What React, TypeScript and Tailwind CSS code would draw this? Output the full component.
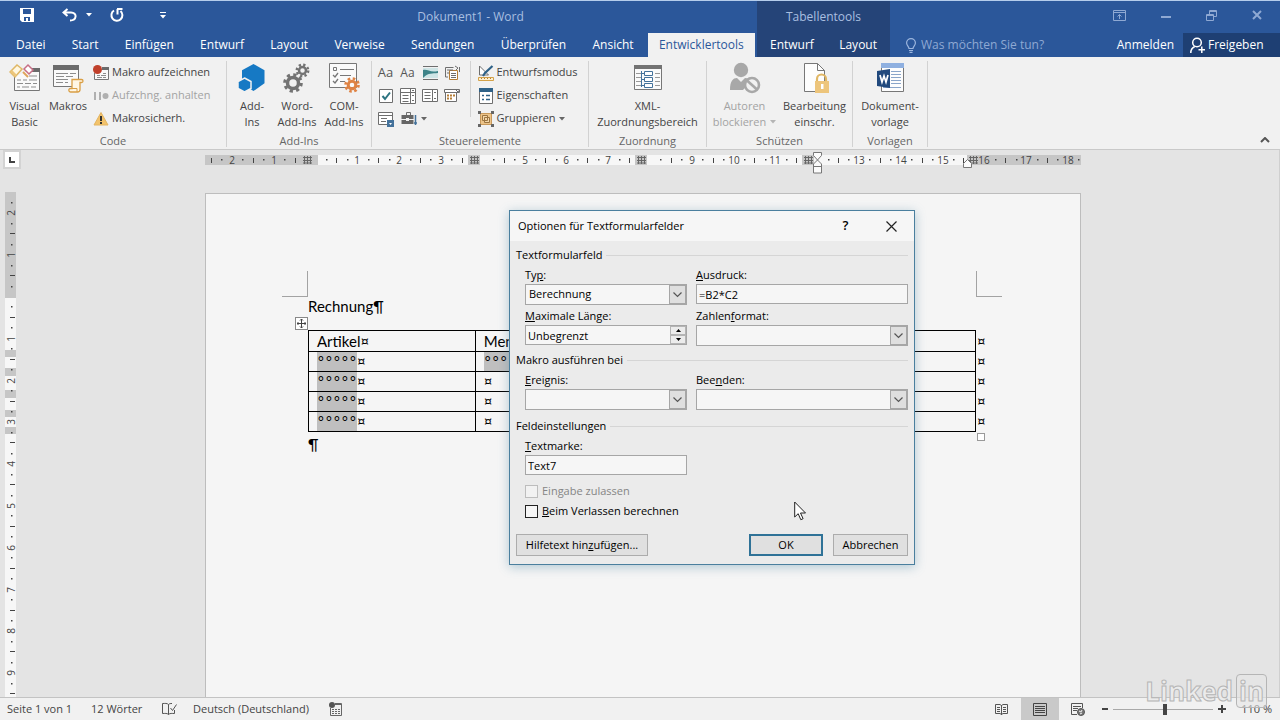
import type { ReactNode } from "react";

const tabs = ["Datei", "Start", "Einfügen", "Entwurf", "Layout", "Verweise", "Sendungen", "Überprüfen", "Ansicht"];

/* ---------- small helpers ---------- */

function Caret({ className = "text-[#666]" }: { className?: string }) {
  return (
    <svg width="6" height="4" viewBox="0 0 6 4" className={className}>
      <path d="M0 0h6L3 3.5z" fill="currentColor" />
    </svg>
  );
}

function BigButton({ icon, lines, disabled, caret, className }: {
  icon: ReactNode;
  lines: [string, string?];
  disabled?: boolean;
  caret?: boolean;
  className: string;
}) {
  return (
    <button disabled={disabled} className={`flex flex-col items-center whitespace-nowrap ${disabled ? "text-[#a3a3a3]" : ""} ${className}`}>
      <span className="mb-1 flex h-[33px] items-center">{icon}</span>
      <span className="leading-4">{lines[0]}</span>
      {lines[1] && (
        <span className="flex items-center gap-1 leading-4">
          {lines[1]}
          {caret && <Caret className="text-[#b5b5b5]" />}
        </span>
      )}
    </button>
  );
}

function SmallButton({ icon, label, disabled, caret }: { icon: ReactNode; label: string; disabled?: boolean; caret?: boolean }) {
  return (
    <button disabled={disabled} className={`flex h-[23px] items-center gap-[3px] whitespace-nowrap ${disabled ? "text-[#a3a3a3]" : ""}`}>
      {icon}
      {label}
      {caret && <Caret />}
    </button>
  );
}

function Group({ title, className, children }: { title: string; className: string; children: ReactNode }) {
  return (
    <section aria-label={title} className={`flex shrink-0 flex-col border-r border-[#d2d2d2] ${className}`}>
      <div className="flex flex-1 justify-center">{children}</div>
      <div className="h-3 text-center leading-3 text-[#666]">{title}</div>
    </section>
  );
}

/* ---------- ribbon icons ---------- */

const VisualBasicIcon = () => (
  <svg width="32" height="30" viewBox="0 0 32 30" fill="none">
    <path d="M5.500 14v13.500h25V5.500H23" stroke="#777" fill="#fafafa" />
    <path d="M23 5h8v4h-8z" fill="#6b6b6b" />
    <path d="M8 17h4m2 0h4m2 0h8M8 20.500h6m2 0h6m2 0h4M8 24h3m2 0h7m2 0h5M20 13h8" stroke="#8d8d8d" />
    <path d="M1 9l7-7 5 4-7 8z" fill="#fff7e0" stroke="#dfb765" strokeWidth="1.500" />
    <path d="M1 9l5 5 2-2-5-5z" fill="#ecc67b" />
    <path d="M15 6l4-4 5 5-4 4z" fill="#fff" stroke="#c76f86" strokeWidth="1.500" />
    <path d="M14 9l5 5" stroke="#dfa45b" strokeWidth="2" />
  </svg>
);

const MacrosIcon = () => (
  <svg width="32" height="30" viewBox="0 0 32 30" fill="none">
    <path d="M1.500 2.500h25v21h-25z" fill="#fafafa" stroke="#777" />
    <path d="M1 2h26v5H1z" fill="#6b6b6b" />
    <path d="M4 10.500h12m2 0h6M4 13.500h8m2 0h7M4 16.500h12M4 19.500h7m2 0h3" stroke="#8d8d8d" />
    <path d="M20 16.500h9.500c2 0 2 3 0 3H28v7c0 2-1 2.500-2.500 2.500h-7c-2 0-2.500-3.500 0-3.500h1.500z" fill="#fff6e4" stroke="#d99e44" strokeWidth="1.300" />
    <path d="M18 25.500h7v3.500" stroke="#d99e44" />
  </svg>
);

const RecordIcon = () => (
  <svg width="16" height="16" viewBox="0 0 16 16" fill="none">
    <path d="M1.500 8v6.500h14V2.500H9" stroke="#777" fill="#fafafa" />
    <path d="M9 2h7v3H9z" fill="#6b6b6b" />
    <path d="M4 10.500h3m1 0h5M4 12.500h5m1 0h3M10 8.500h3" stroke="#8d8d8d" />
    <circle cx="4.500" cy="4.500" r="4.500" fill="#c0402b" />
  </svg>
);

const PauseIcon = () => (
  <svg width="16" height="16" viewBox="0 0 16 16" fill="#b0b0b0">
    <path d="M1 4h2v8H1zM6 4h2v8H6z" />
    <circle cx="12.500" cy="8" r="3" />
  </svg>
);

const WarnIcon = () => (
  <svg width="16" height="16" viewBox="0 0 16 16">
    <path d="M8 1.500l7 12.500H1z" fill="#f3c36b" stroke="#e3b461" strokeLinejoin="round" />
    <path d="M7 5h2v5H7zM7 11h2v2H7z" fill="#333" />
  </svg>
);

const AddInsIcon = () => (
  <svg width="30" height="30" viewBox="0 0 30 30" fill="#1679c4">
    <path d="M16.500 1l11 6.300v13L16.500 28 5 21V7.300z" />
    <path d="M7.500 15l6.500 3.500v7L7.500 29 1 25.500v-7z" stroke="#f1f1f1" strokeWidth="1.500" />
  </svg>
);

const GearsIcon = () => (
  <svg width="30" height="30" viewBox="0 0 30 30" fill="none" stroke="#737373">
    <circle cx="11" cy="20" r="5.500" strokeWidth="3.500" />
    <circle cx="11" cy="20" r="8.300" strokeWidth="3" strokeDasharray="3.260 3.260" />
    <circle cx="20.500" cy="7.500" r="3.500" strokeWidth="2.500" />
    <circle cx="20.500" cy="7.500" r="5.700" strokeWidth="2.500" strokeDasharray="2.240 2.240" />
  </svg>
);

const ComIcon = () => (
  <svg width="32" height="32" viewBox="0 0 32 32" fill="none">
    <path d="M1.500 1.500h27v24h-27z" fill="#fafafa" stroke="#777" />
    <path d="M5.500 5.500h3v3h-3zM12 7.500h14M12 13.500h11M12 19.500h5" stroke="#777" />
    <path d="M5 13l2 2 3-4M5 19l2 2 3-4" stroke="#777" strokeWidth="1.300" />
    <circle cx="24" cy="23" r="3.800" stroke="#df8344" strokeWidth="3" />
    <circle cx="24" cy="23" r="6.500" stroke="#df8344" strokeWidth="2.600" strokeDasharray="2.550 2.550" />
  </svg>
);

const XmlIcon = () => (
  <svg width="30" height="30" viewBox="0 0 30 30" fill="none">
    <path d="M1.500 2.500h27v24h-27z" fill="#fafafa" stroke="#777" />
    <path d="M1 2h28v4H1z" fill="#737373" />
    <path d="M3 10.500h5M3 14.500h5M3 18.500h5M3 22.500h5M22 10.500h5M22 14.500h5M22 18.500h5M22 22.500h5" stroke="#999" />
    <path d="M8.500 8v16M8.500 10.500h3M8.500 16.500h3M8.500 22.500h3" stroke="#44729b" />
    <path d="M11.500 8.500h8v4h-8zM11.500 14.500h8v4h-8zM11.500 20.500h8v4h-8z" fill="#fff" stroke="#44729b" />
  </svg>
);

const BlockAuthorsIcon = () => (
  <svg width="32" height="32" viewBox="0 0 32 32" fill="none">
    <circle cx="12" cy="8" r="7.200" fill="#a8a8a8" />
    <path d="M1 28c0-9 3-12 7-12l4 4 4-4c3 0 5 1 6 3l-8 9z" fill="#a8a8a8" />
    <circle cx="23" cy="23" r="7" fill="#f1f1f1" stroke="#a8a8a8" strokeWidth="2.600" />
    <path d="M18 18.500l10 9" stroke="#a8a8a8" strokeWidth="2.600" />
  </svg>
);

const RestrictIcon = () => (
  <svg width="30" height="32" viewBox="0 0 30 32" fill="none">
    <path d="M4.500 1.500h13l7 7v21h-20z" fill="#fdfdfd" stroke="#777" />
    <path d="M17.500 1.500v7h7" stroke="#777" />
    <path d="M17 20v-3a4.500 4.500 0 019 0v3" stroke="#e0b765" strokeWidth="2.200" />
    <path d="M15 19h14v12H15z" fill="#edc57b" />
    <path d="M21 22h2.500v5H21z" fill="#fff" />
  </svg>
);

const TemplateIcon = () => (
  <svg width="30" height="32" viewBox="0 0 30 32" fill="none">
    <path d="M6.500 1.500h22v28h-22z" fill="#fdfdfd" stroke="#777" />
    <path d="M6 1h23v5H6z" fill="#8fb0e0" />
    <path d="M16 9.500h10M16 12.500h10M16 15.500h10M16 18.500h10M16 21.500h10M8 25.500h18" stroke="#8aa5c9" />
    <path d="M2 9l13-2v19L2 24z" fill="#21497d" />
    <path d="M5 13l2 7 2-6 2 6 2-7" stroke="#fff" strokeWidth="1.700" />
  </svg>
);

/* form control icons, 16px each */
const ctl = (children: ReactNode) => (
  <svg width="16" height="16" viewBox="0 0 16 16" fill="none" stroke="#6e6e6e">{children}</svg>
);

const controls: { label: string; icon: ReactNode }[] = [
  { label: "Rich-Text", icon: <span className="text-[13px] text-[#555]">Aa</span> },
  { label: "Nur-Text", icon: <span className="text-[12px] text-[#555]">Aa</span> },
  { label: "Bild", icon: ctl(<><path d="M1 1.500h15M1 14.500h15" /><path d="M1 3h15v10H1z" fill="#cfe5e6" stroke="none" /><path d="M1 5c5-1 7 3 15 1v2c-6 1-9-1-15 5z" fill="#3d8388" stroke="none" /></>) },
  { label: "Baustein", icon: ctl(<><path d="M5.500 5.500h8v9h-8z" fill="#fff" stroke="#b57d35" /><path d="M7 8.500h5M7 10.500h5M7 12.500h5" /><path d="M1.500 12V2.500h8M1.500 12H4M15.500 2v5M11 1l3 2-2 2M3 5h6M3 8h2" /></>) },
  { label: "Kontrollkästchen", icon: ctl(<><path d="M1.500 1.500h13v13h-13z" fill="#fff" /><path d="M4.500 8l2.500 3 5-6.500" stroke="#2c7481" strokeWidth="2" /></>) },
  { label: "Kombinationsfeld", icon: ctl(<><path d="M.5.500h15v15H.5zM10.500.500v15M.5 4.500h15" fill="#fff" /><path d="M2.500 7.500h6M2.500 10.500h6M2.500 13.500h6M12 2l1 1 1-1M12 8l1-1 1 1M12 12l1 1 1-1" /></>) },
  { label: "Dropdownliste", icon: ctl(<><path d="M.5 1.500h15v12H.5zM10.500 1.500v12" fill="#fff" /><path d="M2.500 4.500h6M2.500 7.500h6M2.500 10.500h6M12 5l1-1 1 1M12 10l1 1 1-1" /></>) },
  { label: "Datum", icon: ctl(<><path d="M.5 1.500h15v3H.5zM1.500 4.500h11v9h-11z" fill="#fff" /><path d="M12 2l2 2 1.500-2" /><path d="M3 7.500h2m1 0h2m1 0h2M3 10.500h2m1 0h2" stroke="#b57d35" strokeWidth="1.800" /></>) },
  { label: "Wiederholung", icon: ctl(<><path d="M.5 1.500h14v12H.5zM.5 4.500h14" fill="#fff" /><path d="M3 7.500h6M3 10.500h5" /><path d="M9 9h7v7H9z" fill="#44729b" stroke="none" /><path d="M11 12l1.500 2 1.500-2z" fill="#fff" stroke="none" /></>) },
  { label: "Vorversionstools", icon: ctl(<><path d="M5.500 4V1.500h4V4" /><path d="M.5 4h12v9H.5z" fill="#666" stroke="none" /><path d="M0 8.500h13" stroke="#f1f1f1" /><path d="M5 7h3v3H5z" fill="#f1f1f1" stroke="none" /><path d="M14.500 4v10M13 12h3" strokeWidth="1.500" stroke="#44729b" /></>) },
];

const DesignIcon = () => (
  <svg width="16" height="16" viewBox="0 0 16 16" fill="none">
    <path d="M1.500 1v9h9z" fill="#fff" stroke="#6e6e6e" />
    <path d="M14.500 1L7 8l-2 3" stroke="#2e6187" strokeWidth="2.200" />
    <path d="M.5 12.500h15v3H.5z" fill="#fff0cf" stroke="#d3a148" />
    <path d="M3.500 13v1M6.500 13v1M9.500 13v1M12.500 13v1" stroke="#b57d35" />
  </svg>
);

const PropertiesIcon = () => (
  <svg width="16" height="16" viewBox="0 0 16 16" fill="none">
    <path d="M1.500.500h13v15h-13z" fill="#fff" stroke="#6e6e6e" />
    <path d="M1 0h14v4H1z" fill="#2e6187" />
    <path d="M4 7.500h2M4 11.500h2M8 7.500h4M8 11.500h4" stroke="#2e6187" strokeWidth="1.500" />
  </svg>
);

const GroupIcon = () => (
  <svg width="16" height="16" viewBox="0 0 16 16" fill="none">
    <path d="M2.500 2.500h11v11h-11z" fill="#ecc48a" stroke="#c9995a" />
    <path d="M4.500 4.500h5v5h-5zM6.500 6.500h5v5h-5z" fill="#f3d6a8" stroke="#9b7440" />
    <path d="M0 0h3v3H0zM13 0h3v3h-3zM0 13h3v3H0zM13 13h3v3h-3z" fill="#666" />
  </svg>
);

/* ---------- rulers ---------- */

const CM = 41.8;

function HorizontalRuler() {
  const zero = 110.500;
  const marks: ReactNode[] = [];
  const hidden = [0, 4, 8, 12];
  for (let q = -10; q <= 73; q++) {
    const x = Math.round(zero + (q * CM) / 4);
    const n = q / 4;
    if (x < 4 || x > 874) continue;
    if (Number.isInteger(n)) {
      if (!hidden.includes(n)) {
        marks.push(<text key={q} x={x} y="14" textAnchor="middle">{Math.abs(n)}</text>);
      }
    } else if (q % 2 === 0) {
      marks.push(<path key={q} d={`M${x + 0.5} 8v5`} stroke="#444" />);
    } else {
      marks.push(<path key={q} d={`M${x} 9h1.500v1.500h-1.500z`} />);
    }
  }
  return (
    <svg width="876" height="25" viewBox="0 0 876 25" className="shrink-0 text-[10px]" fill="#444">
      <path d="M0 5h876v10H0z" fill="#c6c6c6" />
      <path d="M113 5h650v10H113z" fill="#f7f7f7" />
      {marks}
      {[102, 269, 436, 603, 768].map((x) => (
        <g key={x}>
          <path d={`M${x - 6} 5h12v10h-12z`} fill="#c6c6c6" />
          <path d={`M${x - 2.5} 6v8M${x + 0.5} 6v8M${x + 3.5} 6v8M${x - 4} 7.500h9M${x - 4} 10.500h9M${x - 4} 13h9`} stroke="#666" />
        </g>
      ))}
      <path d="M608.500 2.500h8v3l-4 4.500 4 4v9h-8v-9l4-4-4-4.500zM608.500 16.500h8" fill="#fbfbfb" stroke="#777" />
      <path d="M758.500 17.500v-4l4-4 4 4v4z" fill="#fbfbfb" stroke="#777" />
    </svg>
  );
}

function VerticalRuler() {
  const zero = 105;
  const marks: ReactNode[] = [];
  for (let q = -9; q <= 38; q++) {
    const y = Math.round(zero + (q * CM) / 4);
    const n = q / 4;
    if (Number.isInteger(n)) {
      if (n !== 0) {
        marks.push(<text key={q} transform={`translate(10 ${y}) rotate(-90)`} textAnchor="middle">{Math.abs(n)}</text>);
      }
    } else if (q % 2 === 0) {
      marks.push(<path key={q} d={`M5 ${y - 0.5}h5`} stroke="#444" />);
    } else {
      marks.push(<path key={q} d={`M6 ${y - 1}h1.500v1.500h-1.500z`} />);
    }
  }
  return (
    <svg width="17" height="505" viewBox="0 0 17 505" className="text-[10px]" fill="#444">
      <path d="M0 0h11v505H0z" fill="#f7f7f7" />
      <path d="M0 0h11v106H0zM0 158h11v7H0zM0 176h11v8H0zM0 198h11v8H0zM0 218h11v7H0zM0 235h11v7H0z" fill="#c6c6c6" />
      {marks}
    </svg>
  );
}

/* ---------- document ---------- */

function FormField() {
  return (
    <span className="flex h-[19px] w-10 justify-around bg-[#bfbfbf] text-[14px] leading-[18px]">
      {[0, 1, 2, 3, 4].map((i) => (
        <span key={i}>°</span>
      ))}
    </span>
  );
}

function InvoiceTable() {
  const cell = "border border-black p-0 pl-2 align-middle leading-[19px]";
  return (
    <table className="w-full table-fixed border-collapse">
      <thead>
        <tr className="h-[21px] text-left">
          <th className={`${cell} font-normal`}>Artikel¤</th>
          <th className={`${cell} font-normal`}>Menge¤</th>
          <th className={`${cell} font-normal`}>¤</th>
          <th className={`${cell} font-normal`}>¤</th>
        </tr>
      </thead>
      <tbody>
        {[0, 1, 2, 3].map((row) => (
          <tr key={row} className="h-5">
            <td className={cell}><span className="flex"><FormField />¤</span></td>
            <td className={cell}>{row === 0 ? <span className="flex"><FormField />¤</span> : "¤"}</td>
            <td className={cell}>¤</td>
            <td className={cell}>¤</td>
          </tr>
        ))}
      </tbody>
    </table>
  );
}

function Page() {
  return (
    <article className="relative min-h-0 w-[876px] flex-1 overflow-hidden border border-b-0 border-[#bdbdbd] bg-[#f5f5f5] pt-[77px] pr-[104px] pl-[102px] font-[Lato,'Liberation_Sans',sans-serif] text-[15px] text-black">
      <div className="-mx-[26px] flex justify-between">
        <span className="h-[26px] w-[26px] border-r border-b border-[#a3a3a3]" />
        <span className="h-[26px] w-[26px] border-b border-l border-[#a3a3a3]" />
      </div>
      <p className="leading-[19px]">Rechnung¶</p>
      <div className="relative mt-[14px]">
        <button aria-label="Tabelle verschieben" className="absolute -top-[13px] -left-[13px] flex h-[13px] w-[13px] items-center justify-center border border-[#888] bg-white">
          <svg width="9" height="9" viewBox="0 0 9 9" stroke="#444" fill="none">
            <path d="M4.500 0v9M0 4.500h9M3 1.500L4.500 0 6 1.500M3 7.500L4.500 9 6 7.500M1.500 3L0 4.500 1.500 6M7.500 3L9 4.500 7.500 6" />
          </svg>
        </button>
        <InvoiceTable />
        <div className="absolute top-px left-full flex flex-col pl-px leading-[20px]">
          {[0, 1, 2, 3, 4].map((i) => (
            <span key={i}>¤</span>
          ))}
          <span className="mt-[2px] h-2 w-2 border border-[#999] bg-white" />
        </div>
      </div>
      <p className="leading-6">¶</p>
    </article>
  );
}

/* ---------- dialog ---------- */

function Section({ title, children }: { title: string; children: ReactNode }) {
  return (
    <fieldset className="min-w-0">
      <legend className="flex w-full items-center gap-1 leading-4">
        {title}
        <span className="h-px flex-1 bg-[#d5d5d5]" />
      </legend>
      <div className="grid grid-cols-[162px_1fr] gap-x-[9px] pt-px pl-[9px]">{children}</div>
    </fieldset>
  );
}

function Field({ id, label, children }: { id: string; label: ReactNode; children: ReactNode }) {
  return (
    <div>
      <label htmlFor={id} className="block h-5 leading-[22px]">{label}</label>
      {children}
    </div>
  );
}

function Combo({ id, value = "" }: { id: string; value?: string }) {
  return (
    <div className="relative h-[21px] border border-[#a6a6a6] bg-[#f6f6f6]">
      <select id={id} className="block h-full w-full appearance-none bg-transparent px-[3px] outline-none">
        <option>{value}</option>
      </select>
      <span className="pointer-events-none absolute inset-y-0 right-0 flex w-[17px] items-center justify-center border border-[#a6a6a6] bg-[#dfdfdf]">
        <svg width="9" height="6" viewBox="0 0 9 6" fill="none" stroke="#555" strokeWidth="1.200">
          <path d="M.5.500l4 4 4-4" />
        </svg>
      </span>
    </div>
  );
}

function OptionsDialog() {
  const input = "block h-5 w-full border border-[#a6a6a6] bg-[#f6f6f6] px-[2px] outline-none";
  return (
    <div role="dialog" aria-labelledby="dialog-title" className="absolute top-[210px] left-[509px] w-[406px] border border-[#4a7f9e] bg-[#ebebeb] text-[11px] text-black shadow-[0_2px_10px_rgba(70,130,160,0.4)]">
      <header className="flex h-[30px] items-center bg-[#f6f6f6] pl-2">
        <h2 id="dialog-title" className="flex-1">Optionen für Textformularfelder</h2>
        <button aria-label="Hilfe" className="w-[45px] text-[13px] font-semibold">?</button>
        <button aria-label="Schließen" className="flex w-[46px] justify-center">
          <svg width="11" height="11" viewBox="0 0 11 11" stroke="#222" strokeWidth="1.200">
            <path d="M.5.500l10 10M10.500.500l-10 10" />
          </svg>
        </button>
      </header>
      <form className="px-[6px] pt-[6px] pb-2">
        <Section title="Textformularfeld">
          <Field id="typ" label={<>Ty<u>p</u>:</>}><Combo id="typ" value="Berechnung" /></Field>
          <Field id="ausdruck" label={<><u>A</u>usdruck:</>}>
            <input id="ausdruck" defaultValue="=B2*C2" className={input} />
          </Field>
          <Field id="laenge" label={<><u>M</u>aximale Länge:</>}>
            <div className="relative">
              <input id="laenge" defaultValue="Unbegrenzt" className={input} />
              <span className="absolute inset-y-px right-px flex w-4 flex-col">
                <button type="button" aria-label="Mehr" className="flex flex-1 items-center justify-center border border-[#b5b5b5] bg-[#ececec]">
                  <svg width="5" height="3" viewBox="0 0 5 3"><path d="M0 3h5L2.500 0z" /></svg>
                </button>
                <button type="button" aria-label="Weniger" className="flex flex-1 items-center justify-center border border-[#b5b5b5] bg-[#ececec]">
                  <svg width="5" height="3" viewBox="0 0 5 3"><path d="M0 0h5L2.500 3z" /></svg>
                </button>
              </span>
            </div>
          </Field>
          <Field id="format" label={<>Zahlen<u>f</u>ormat:</>}><Combo id="format" /></Field>
        </Section>
        <div className="h-[6px]" />
        <Section title="Makro ausführen bei">
          <Field id="ereignis" label={<><u>E</u>reignis:</>}><Combo id="ereignis" /></Field>
          <Field id="beenden" label={<>Bee<u>n</u>den:</>}><Combo id="beenden" /></Field>
        </Section>
        <div className="h-2" />
        <Section title="Feldeinstellungen">
          <Field id="marke" label={<><u>T</u>extmarke:</>}>
            <input id="marke" defaultValue="Text7" className={input} />
          </Field>
          <div className="col-span-2 flex flex-col pt-[6px]">
            <label className="flex h-5 items-center gap-1 text-[#858585]">
              <input type="checkbox" disabled className="h-[13px] w-[13px] appearance-none border border-[#bdbdbd] bg-[#f2f2f2]" />
              Eingabe zulassen
            </label>
            <label className="flex h-5 items-center gap-1">
              <input type="checkbox" className="h-[13px] w-[13px] appearance-none border border-[#222] bg-[#f6f6f6]" />
              <span><u>B</u>eim Verlassen berechnen</span>
            </label>
          </div>
        </Section>
        <div className="mt-[13px] flex">
          <button type="button" className="h-[22px] w-[132px] border border-[#acacac] bg-[#e0e0e0]">Hilfetext hin<u>z</u>ufügen...</button>
          <button type="button" className="mr-[10px] ml-auto h-[22px] w-[74px] border-2 border-[#2f7297] bg-[#e0e0e0]">OK</button>
          <button type="button" className="h-[22px] w-[75px] border border-[#acacac] bg-[#e0e0e0]">Abbrechen</button>
        </div>
      </form>
    </div>
  );
}

/* ---------- window chrome ---------- */

function TitleBar() {
  return (
    <header className="flex h-[57px] shrink-0 border-t border-[#b5cdec] bg-[#2b579a]">
      <div className="flex w-[757px] flex-col">
        <div className="flex h-8 items-center">
          <div className="flex w-[184px] items-center pb-1 pl-5 text-white">
            <button aria-label="Speichern">
              <svg width="14" height="14" viewBox="0 0 14 14" fill="none">
                <path d="M0 0h14v14H2l-2-2z" fill="#fff" />
                <path d="M3 1h8v5H3zM4 9h6v4H8v-3H6v3H4z" fill="#2b579a" />
              </svg>
            </button>
            <button aria-label="Rückgängig" className="ml-7 flex items-center gap-2">
              <svg width="16" height="14" viewBox="0 0 16 14" fill="none" stroke="#fff" strokeWidth="2">
                <path d="M5.500 1L1.500 4.500l4 3.500M2 4.500h7c6.500 0 6 8-1 8" />
              </svg>
              <Caret className="text-white" />
            </button>
            <button aria-label="Wiederholen" className="ml-[18px]">
              <svg width="14" height="14" viewBox="0 0 14 14" fill="none" stroke="#fff" strokeWidth="2">
                <path d="M4 2.500a5.500 5.500 0 106.500.500M7 1h5.500M7.500 1v5.500" />
              </svg>
            </button>
            <button aria-label="Anpassen" className="ml-[36px]">
              <svg width="6" height="7" viewBox="0 0 6 7" fill="#fff"><path d="M0 0h6v1H0zM0 3h6L3 6.500z" /></svg>
            </button>
          </div>
          <h1 className="flex-1 text-center text-[#a9bfe0]">Dokument1 - Word</h1>
        </div>
        <nav className="flex h-6 justify-between pr-[2px] pl-1">
          {tabs.map((t) => (
            <button key={t} className="px-3 leading-6 text-white">{t}</button>
          ))}
          <button className="w-[107px] bg-[#f1f1f1] leading-6 text-[#2b579a]">Entwicklertools</button>
        </nav>
      </div>
      <div className="flex w-[133px] flex-col bg-[#254478]">
        <div className="h-8 text-center leading-8 text-[#a9bfe0]">Tabellentools</div>
        <nav className="flex h-6 justify-between px-[13px]">
          <button className="leading-6 text-white">Entwurf</button>
          <button className="leading-6 text-white">Layout</button>
        </nav>
      </div>
      <div className="flex flex-1 flex-col">
        <div className="flex h-8 items-center justify-end gap-[35px] pr-[18px] pb-1">
          <button aria-label="Menübandoptionen">
            <svg width="13" height="11" viewBox="0 0 13 11" fill="none" stroke="#8fa9d3"><path d="M.5.500h12v10H.5zM.5 2.500h12M6.500 9V4.500M4.500 6.500l2-2 2 2" /></svg>
          </button>
          <button aria-label="Minimieren">
            <svg width="10" height="11" viewBox="0 0 10 11"><path d="M0 6h10v2H0z" fill="#8fa9d3" /></svg>
          </button>
          <button aria-label="Verkleinern">
            <svg width="11" height="11" viewBox="0 0 11 11" fill="none" stroke="#8fa9d3"><path d="M.5 4.500h7v6h-7zM.5 5.500h7M3.500 4V.500h7v6H8M3.500 1.500h7" /></svg>
          </button>
          <button aria-label="Schließen">
            <svg width="10" height="10" viewBox="0 0 10 10" stroke="#8fa9d3" strokeWidth="2"><path d="M1 1l8 8M9 1L1 9" /></svg>
          </button>
        </div>
        <div className="flex h-6 items-center pl-4">
          <label className="flex flex-1 items-center gap-[5px] text-[#8fa9d3]">
            <svg width="10" height="15" viewBox="0 0 10 15" fill="none" stroke="#9db6de" strokeWidth="1.200">
              <path d="M3 10.500c0-2-2.400-3-2.400-5.500a4.400 4.400 0 018.800 0c0 2.500-2.400 3.500-2.400 5.500zM3 12.500h4M3.500 14.300h3" />
            </svg>
            <input aria-label="Was möchten Sie tun?" placeholder="Was möchten Sie tun?" className="w-[150px] bg-transparent outline-none placeholder:text-[#8fa9d3]" />
          </label>
          <button className="mr-[9px] text-white">Anmelden</button>
          <button className="flex h-6 w-[97px] items-center gap-[3px] bg-[#1e3f73] pl-[7px] text-white">
            <svg width="15" height="17" viewBox="0 0 15 17" fill="none" stroke="#fff" strokeWidth="1.500">
              <circle cx="7" cy="5.500" r="4.300" />
              <path d="M.8 16c0-3.500 1.700-5.500 4-6.500M8.500 12.800h6.500M11.800 9.500v6.500" />
            </svg>
            Freigeben
          </button>
        </div>
      </div>
    </header>
  );
}

function Ribbon() {
  return (
    <div className="flex h-[93px] shrink-0 border-b border-[#c9c9c9] bg-[#f1f1f1] pt-1 pb-[2px] text-[11px] text-[#444]">
      <Group title="Code" className="w-[227px]">
        <BigButton icon={<VisualBasicIcon />} lines={["Visual", "Basic"]} className="w-[43px]" />
        <BigButton icon={<MacrosIcon />} lines={["Makros"]} className="w-[44px]" />
        <div className="ml-[3px] flex w-[130px] flex-col items-start">
          <SmallButton icon={<RecordIcon />} label="Makro aufzeichnen" />
          <SmallButton icon={<PauseIcon />} label="Aufzchng. anhalten" disabled />
          <SmallButton icon={<WarnIcon />} label="Makrosicherh." />
        </div>
      </Group>
      <Group title="Add-Ins" className="w-[145px]">
        <BigButton icon={<AddInsIcon />} lines={["Add-", "Ins"]} className="w-[44px]" />
        <BigButton icon={<GearsIcon />} lines={["Word-", "Add-Ins"]} className="w-[46px]" />
        <BigButton icon={<ComIcon />} lines={["COM-", "Add-Ins"]} className="w-[48px]" />
      </Group>
      <Group title="Steuerelemente" className="w-[217px]">
        <div className="grid h-[69px] w-[88px] grid-cols-4 grid-rows-3">
          {controls.map((c, i) => (
            <button key={c.label} aria-label={c.label} className={`flex items-center ${i === 9 ? "col-span-2 gap-1 pl-1" : "justify-center"}`}>
              {c.icon}
              {i === 9 && <Caret />}
            </button>
          ))}
        </div>
        <div className="mx-[7px] h-14 w-px bg-[#d2d2d2]" />
        <div className="flex w-[108px] flex-col items-start">
          <SmallButton icon={<DesignIcon />} label="Entwurfsmodus" />
          <SmallButton icon={<PropertiesIcon />} label="Eigenschaften" />
          <SmallButton icon={<GroupIcon />} label="Gruppieren" caret />
        </div>
      </Group>
      <Group title="Zuordnung" className="w-[118px]">
        <BigButton icon={<XmlIcon />} lines={["XML-", "Zuordnungsbereich"]} className="w-full" />
      </Group>
      <Group title="Schützen" className="w-[146px]">
        <BigButton icon={<BlockAuthorsIcon />} lines={["Autoren", "blockieren"]} disabled caret className="w-[70px]" />
        <BigButton icon={<RestrictIcon />} lines={["Bearbeitung", "einschr."]} className="w-[70px]" />
      </Group>
      <Group title="Vorlagen" className="w-[75px]">
        <BigButton icon={<TemplateIcon />} lines={["Dokument-", "vorlage"]} className="w-full" />
      </Group>
      <button aria-label="Menüband reduzieren" className="mr-[10px] ml-auto self-end pb-1">
        <svg width="10" height="6" viewBox="0 0 10 6" fill="none" stroke="#555" strokeWidth="2"><path d="M1 5l4-4 4 4" /></svg>
      </button>
    </div>
  );
}

function StatusBar() {
  return (
    <footer className="flex h-[23px] shrink-0 items-center border-t border-[#c3c3c3] bg-[#f1f1f1] pr-2 pl-[7px] text-[11px] text-[#444]">
      <span className="w-[84px]">Seite 1 von 1</span>
      <span className="w-[71px]">12 Wörter</span>
      <svg width="15" height="14" viewBox="0 0 15 14" fill="none" stroke="#555">
        <path d="M6.500 2.500C5 1 3 1.500.500 1.500v10c2.500 0 4.500-.5 6 1 1.500-1.500 3.500-1 6-1V8M6.500 2.500v10M6.500 2.500c1-1 2-1 3.500-1M8.500 6l2 2.500 4-6" />
      </svg>
      <span className="ml-4 w-[136px]">Deutsch (Deutschland)</span>
      <svg width="13" height="14" viewBox="0 0 13 14" fill="none" stroke="#666">
        <path d="M1.500 6v7.500h11v-12H6M6 2.500h6M3 7.500h2m1 0h2m1 0h2M3 9.500h2m1 0h2m1 0h2M3 11.500h2m1 0h2m1 0h2" />
        <circle cx="3" cy="3" r="3" fill="#555" stroke="none" />
      </svg>
      <div className="ml-auto flex h-full items-center">
        <button aria-label="Lesemodus" className="flex h-full w-[39px] items-center justify-center">
          <svg width="13" height="13" viewBox="0 0 13 13" fill="none" stroke="#555">
            <path d="M6.500 2.500L5 1.500H.500v9H5l1.500 1 1.500-1h4.500v-9H8zM6.500 2v10M2 4.500h3M2 6.500h3M2 8.500h3M8 4.500h3M8 6.500h3M8 8.500h3" />
          </svg>
        </button>
        <button aria-label="Seitenlayout" className="flex h-full w-[38px] items-center justify-center bg-[#c9c9c9]">
          <svg width="14" height="13" viewBox="0 0 14 13" fill="none" stroke="#444">
            <path d="M.5.500h13v12H.5zM2 3.500h10M2 5.500h10M2 7.500h10M2 9.500h10" />
          </svg>
        </button>
        <button aria-label="Weblayout" className="flex h-full w-[38px] items-center justify-center">
          <svg width="14" height="13" viewBox="0 0 14 13" fill="none" stroke="#555">
            <path d="M6 11.500H.500V.500h11V5M2 3.500h8M2 5.500h5M2 7.500h4" />
            <circle cx="10" cy="9" r="3.500" fill="#777" />
            <path d="M8 8l2 1 1-2M9 11l2-1" stroke="#f1f1f1" />
          </svg>
        </button>
        <button aria-label="Verkleinern" className="ml-[5px] h-[2px] w-[6px] bg-[#444]" />
        <span className="relative mx-[5px] flex h-full w-[100px] items-center">
          <input type="range" aria-label="Zoom" min="10" max="200" defaultValue="110" className="absolute inset-0 h-full w-full opacity-0" />
          <span className="h-px w-full bg-[#a9a9a9]" />
          <span className="absolute left-[50px] h-[11px] w-1 bg-[#444]" />
        </span>
        <button aria-label="Vergrößern">
          <svg width="8" height="8" viewBox="0 0 8 8"><path d="M3 0h2v3h3v2H5v3H3V5H0V3h3z" fill="#444" /></svg>
        </button>
        <span className="ml-[14px] w-8 text-right whitespace-nowrap">110 %</span>
      </div>
    </footer>
  );
}

export default function App() {
  return (
    <div className="relative flex h-screen flex-col overflow-hidden bg-[#e4e4e4] font-['Open_Sans','Noto_Sans',sans-serif] text-[12px]">
      <TitleBar />
      <Ribbon />
      <main className="flex min-h-0 flex-1">
        <div className="flex w-[22px] shrink-0 flex-col">
          <div className="ml-[3px] h-[42px]">
            <button aria-label="Tabstopp" className="flex h-[19px] w-[18px] items-center justify-center border-2 border-[#d3d3d3] bg-white">
              <svg width="6" height="6" viewBox="0 0 6 6" fill="none" stroke="#444" strokeWidth="2"><path d="M1 0v5h5" /></svg>
            </button>
          </div>
          <div className="ml-[5px] min-h-0 flex-1 overflow-hidden">
            <VerticalRuler />
          </div>
        </div>
        <div className="flex min-w-0 flex-1 flex-col items-center">
          <HorizontalRuler />
          <div className="h-[18px] shrink-0" />
          <Page />
        </div>
        <div className="w-4 shrink-0 border-r border-[#cfcfcf]" />
      </main>
      <StatusBar />
      <OptionsDialog />

      <div className="pointer-events-none absolute right-[13px] bottom-3 flex items-center gap-[3px] text-[26px] leading-8 font-bold text-[#ebebeb] [-webkit-text-stroke:1px_#b5b5b5]">
        <span>Linked</span>
        <span className="rounded border border-[#b5b5b5] bg-[#e6e6e6]/60 px-[2px] leading-8">in</span>
      </div>
      <svg width="13" height="20" viewBox="0 0 13 20" className="pointer-events-none absolute top-[501px] left-[794px]">
        <path d="M.7 1v15l3.500-3.300 2.600 6 2.300-1-2.600-5.700h5z" fill="#fff" stroke="#222" />
      </svg>
    </div>
  );
}
